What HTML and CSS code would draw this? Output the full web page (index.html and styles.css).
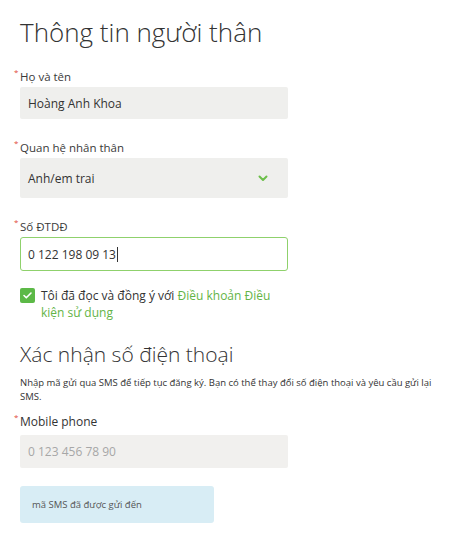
FILE: index.html
```html
<!DOCTYPE html>
<html lang="vi">
<head>
<meta charset="utf-8">
<link rel="stylesheet" href="styles.css">
</head>
<body>
<main class="page">
  <h1 class="title">Thông tin người thân</h1>

  <div class="field f-name">
    <label class="label"><span class="req">*</span>Họ và tên</label>
    <div class="input filled">Hoàng Anh Khoa</div>
  </div>

  <div class="field f-rel">
    <label class="label"><span class="req">*</span>Quan hệ nhân thân</label>
    <div class="input select">
      <span>Anh/em trai</span>
      <svg class="chev" width="10" height="7" viewBox="0 0 10 7"><path d="M1.5 1.5 L5 5 L8.5 1.5" fill="none" stroke="#6cbf4a" stroke-width="2" stroke-linecap="round" stroke-linejoin="round"/></svg>
    </div>
  </div>

  <div class="field f-phone">
    <label class="label"><span class="req">*</span>Số ĐTDĐ</label>
    <div class="input focused">0 122 198 09 13<span class="caret"></span></div>
  </div>

  <div class="agree">
    <span class="check"><svg width="11" height="9" viewBox="0 0 11 9"><path d="M2 4.5 L4.3 6.8 L9 2" fill="none" stroke="#fff" stroke-width="1.6" stroke-linecap="round" stroke-linejoin="round"/></svg></span>
    <p class="agree-text">Tôi đã đọc và đồng ý với <a class="link">Điều khoản Điều kiện sử dụng</a></p>
  </div>

  <h2 class="subtitle">Xác nhận số điện thoại</h2>
  <p class="desc">Nhập mã gửi qua SMS để tiếp tục đăng ký. Bạn có thể thay đổi số điện thoại và yêu cầu gửi lại SMS.</p>

  <div class="field f-mobile">
    <label class="label"><span class="req">*</span>Mobile phone</label>
    <div class="input placeholder">0 123 456 78 90</div>
  </div>

  <div class="alert">mã SMS đã được gửi đến</div>
</main>
</body>
</html>
```
FILE: styles.css
```css
html, body {
  margin: 0;
  padding: 0;
  background: #fff;
}
body {
  font-family: "Open Sans", "Noto Sans", sans-serif;
  color: #333;
}
.page {
  padding: 0 20px;
  width: 432px;
}
.title {
  margin: 0;
  padding-top: 12px;
  font-size: 26px;
  font-weight: 300;
  line-height: 40px;
  color: #333;
}
.field {
  display: flex;
  flex-direction: column;
  width: 268px;
}
.f-name { margin-top: 16px; }
.f-rel { margin-top: 20px; }
.f-phone { margin-top: 20px; }
.label {
  font-size: 11.5px;
  line-height: 17px;
  height: 17px;
  margin-bottom: 2px;
  color: #3a3a3a;
}
.req {
  color: #e04a3a;
  font-size: 8px;
  vertical-align: top;
  line-height: 8px;
  display: inline-block;
  width: 6px;
  margin-left: -6px;
}
.input {
  box-sizing: border-box;
  height: 32px;
  background: #efefed;
  border-radius: 2px;
  padding: 0 8px;
  font-size: 12px;
  display: flex;
  align-items: center;
  color: #333;
}
.input.select {
  height: 40px;
  justify-content: space-between;
  padding-right: 20px;
}
.input.focused {
  height: 34px;
  background: #fff;
  border: 1.5px solid #8fd16c;
  border-radius: 3px;
  padding-left: 7px;
}
.caret {
  display: inline-block;
  width: 1px;
  height: 15px;
  background: #333;
  margin-left: 1px;
}
.input.placeholder {
  height: 33px;
  color: #a7a7a7;
  background: #f1f0ee;
}
.agree {
  display: flex;
  align-items: flex-start;
  gap: 6px;
  margin-top: 16px;
  width: 268px;
}
.check {
  flex: none;
  width: 15px;
  height: 15px;
  border-radius: 2px;
  background: #5cb947;
  display: flex;
  align-items: center;
  justify-content: center;
  margin-top: 1px;
}
.agree-text {
  margin: 0;
  font-size: 12px;
  line-height: 17px;
  color: #333;
  width: 240px;
}
.link {
  color: #63b446;
}
.subtitle {
  margin: 0;
  margin-top: 19px;
  font-size: 21px;
  font-weight: 300;
  line-height: 28px;
  color: #333;
}
.desc {
  margin: 8px 0 0;
  font-size: 9.5px;
  line-height: 14px;
  color: #333;
  width: 420px;
}
.f-mobile { margin-top: 9px; }
.f-mobile .label {
  margin-bottom: 5px;
  font-size: 12px;
  color: #333;
}
.alert {
  box-sizing: border-box;
  margin-top: 18px;
  width: 194px;
  height: 37px;
  background: #d8edf5;
  border-radius: 3px;
  font-size: 9.5px;
  color: #555;
  display: flex;
  align-items: center;
  padding-left: 12px;
}
```
